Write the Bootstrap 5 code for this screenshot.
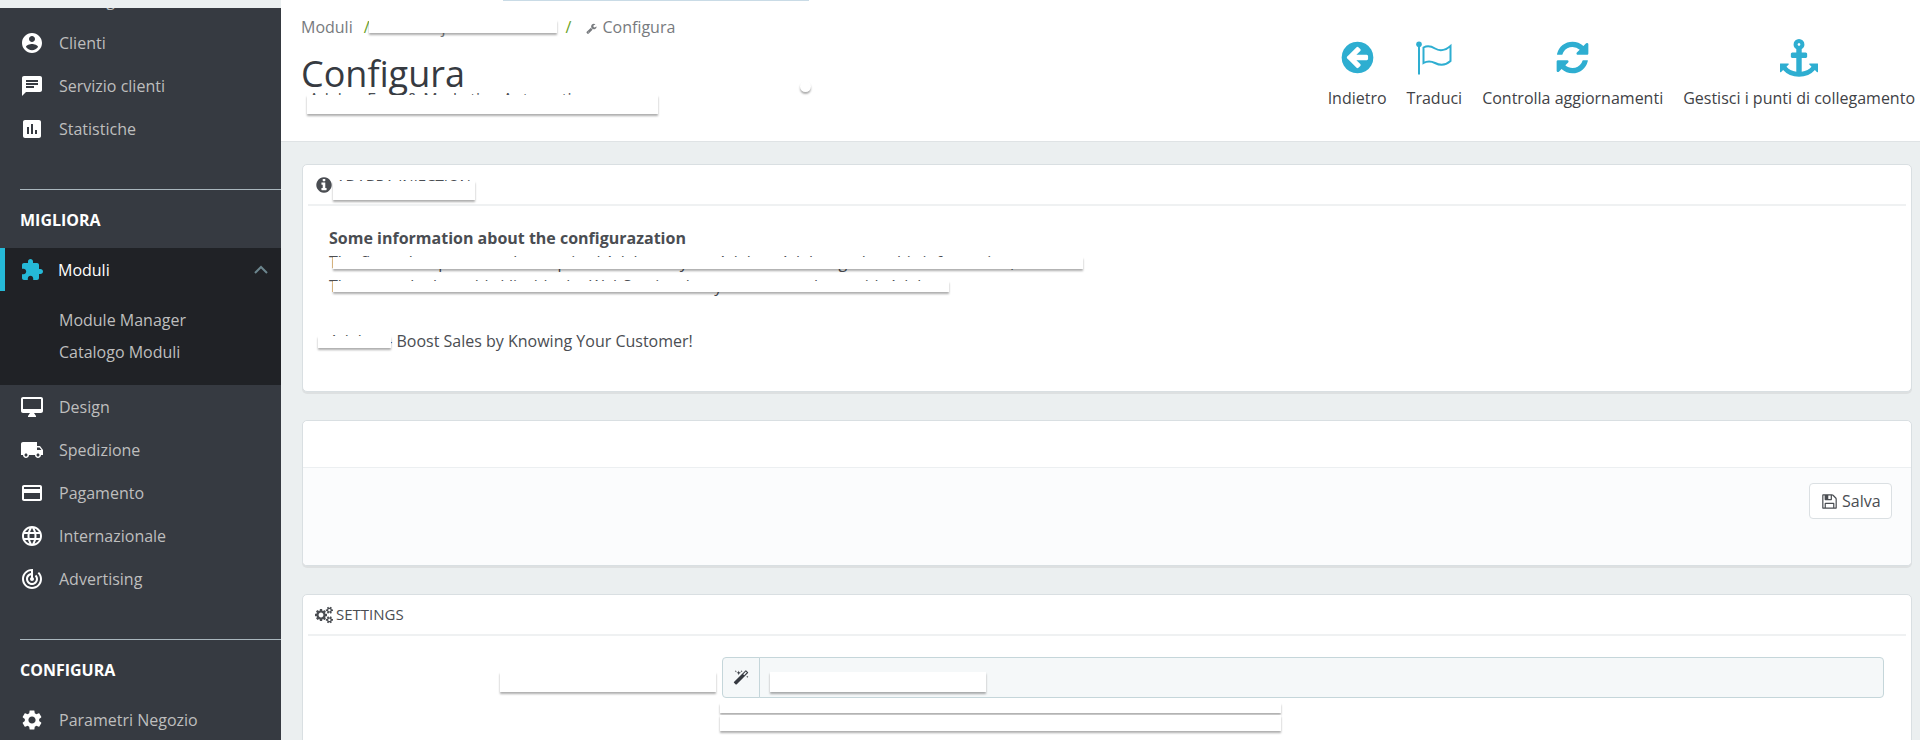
<!DOCTYPE html>
<html lang="it">
<head>
<meta charset="utf-8">
<title>Configura</title>
<link href="https://cdn.jsdelivr.net/npm/bootstrap@5.3.0/dist/css/bootstrap.min.css" rel="stylesheet">
<style>
html,body{height:740px;overflow:hidden}
body{font-family:"Open Sans","Noto Sans",sans-serif;font-size:16px;color:#4a4d52;background:#ebeff0}
a{text-decoration:none}
.app{width:1920px;height:740px;overflow:hidden}
.topline{left:503px;top:0;width:306px;height:1px;background:#c9dbe6}
.side{width:281px;flex:none;margin-top:8px;height:732px;background:#363a41;overflow:hidden}
.side-inner{margin-top:-30px}
.side-row{height:43px;padding-left:20px;color:#bebebe;gap:15px;font-size:16px;text-decoration:none}
.side-row svg{width:24px;height:24px;fill:#fff;flex:none}
.side-open{background:#202226;padding-bottom:17px}
.side-active{color:#fff;border-left:5px solid #25b9d7;padding-left:15px;padding-right:13px;gap:14px}
.side-active svg.piece{fill:#25b9d7;width:24px;height:24px}
.side-active svg.chev{width:14px;height:9px;fill:none;stroke:#6c868e;stroke-width:2;margin-left:auto;flex:none}
.side-sub{height:32px;padding-left:59px;color:#bebebe}
.side-sub-first{margin-top:13px}
.side-head{margin:39px 0 0 20px;border-top:1px solid #a9b6bd;height:59px;padding-top:20px;color:#fff;font-weight:700;font-size:16px;line-height:20px;text-transform:uppercase}
.main{min-width:0}
.head-top{height:142px;background:#fff;border-bottom:1px solid #dfe3e5;padding-left:20px;padding-right:5px}
.crumbs{padding-top:17px;margin:0;line-height:20px;color:#777a7e;white-space:nowrap}
.crumb-sep{color:#6aa31f;margin:0 0 0 11px}
.crumb-sep2{color:#6aa31f;margin:0 15px 0 6px}
.crumbs svg{width:11px;height:11px;fill:#777a7e;margin-right:5px}
.crumb-hid{width:190px;display:inline-block;white-space:nowrap;overflow:hidden;vertical-align:bottom}
.page-title{font-size:36px;line-height:44px;font-weight:400;margin:15px 0 0;color:#363a41}
.page-sub{line-height:20px;margin:-7px 0 0 8px;white-space:nowrap}
.tools{gap:20px;padding-top:38px}
.tool{color:#3f4246;text-decoration:none;line-height:20px;font-size:16px;white-space:nowrap}
.tool-ico{height:39px;margin-bottom:11px}
.tool svg{fill:#2eaed1}
.i32{width:37px;height:37px}
.iflag{width:36px;height:34px}
.i38{width:38px;height:38px}
.content{padding:22px 8px 0 21px}
.panel{--bs-card-border-color:#d9dfe2;--bs-card-border-radius:5px;--bs-card-inner-border-radius:4px;box-shadow:0 2px 0 rgba(0,0,0,.06);margin-bottom:28px;background:#fff}
.panel-head{background:#fff;border:0;border-bottom:2px solid #eff1f2;margin:0 5px;padding:0 7px;height:41px;font-size:15px;gap:3px;color:#4a4d52;text-transform:uppercase}
.panel-head svg{fill:#4a4d52;width:18px;height:18px}
.info-body{padding:20px 26px 0;height:185px;line-height:24px}
.info-body p{margin:0;white-space:nowrap}
.info-lead{font-weight:700}
.info-body .boost{padding-top:31px}
.empty-top{height:47px;background:#fff;border-bottom:1px solid #eceff1;border-radius:5px 5px 0 0}
.empty-foot{height:97px;background:#fbfcfd;padding:15px 19px 0 0;border-radius:0 0 5px 5px}
.save{--bs-btn-padding-x:11px;--bs-btn-padding-y:0;--bs-btn-font-size:16px;--bs-btn-border-color:#dbe0e3;--bs-btn-color:#4a4d52;--bs-btn-bg:#fff;--bs-btn-border-radius:4px;height:36px;width:83px;display:flex;align-items:center;gap:4px;padding-right:0;border-width:1px}
.save svg{width:17px;height:17px;fill:#4a4d52;flex:none}
.form-area{height:200px;position:relative}
.wand-group{margin:21px 27px 0 419px;width:auto;height:41px}
.wand-add{background:#f5f8f9;border-color:#c5d6da;width:38px;padding:0;justify-content:center;border-radius:4px 0 0 4px}
.wand-add svg{width:16px;height:16px;fill:#363a41}
.wand-input{background:#f5f8f9;border-color:#c5d6da;border-radius:0 4px 4px 0;height:41px}
.shade{position:absolute;background:#fff;box-shadow:0 2px 2px rgba(0,0,0,.32)}
.s1{left:369px;top:20px;width:188px;height:13px}
.s2{left:307px;top:95px;width:351px;height:19px}
.s3{left:333px;top:181px;width:142px;height:19px}
.s4{left:333px;top:257px;width:750px;height:12px}
.s5{left:333px;top:281px;width:616px;height:11px}
.s6{left:318px;top:336px;width:73px;height:12px}
.s7{left:500px;top:672px;width:216px;height:20px}
.s8{left:770px;top:672px;width:216px;height:20px}
.s9{left:720px;top:703px;width:561px;height:10px}
.s10{left:720px;top:715px;width:561px;height:16px}
.spot{left:800px;top:81px;width:11px;height:11px;border-radius:50%}
</style>
</head>
<body>
<div class="app position-relative d-flex">
  <div class="position-absolute topline"></div>
  <nav class="side">
    <div class="side-inner">
      <a class="side-row d-flex align-items-center"><svg viewBox="0 0 24 24"><path d="M20 4H4v2h16V4zm1 10v-2l-1-5H4l-1 5v2h1v6h10v-6h4v6h2v-6h1zm-9 4H6v-4h6v4z"/></svg>Catalogo</a>
      <a class="side-row d-flex align-items-center"><svg viewBox="0 0 24 24"><path d="M12 2C6.48 2 2 6.48 2 12s4.48 10 10 10 10-4.48 10-10S17.52 2 12 2zm0 3c1.66 0 3 1.34 3 3s-1.34 3-3 3-3-1.34-3-3 1.34-3 3-3zm0 14.2c-2.5 0-4.71-1.28-6-3.22.03-1.99 4-3.08 6-3.08 1.99 0 5.97 1.09 6 3.08-1.29 1.94-3.5 3.22-6 3.22z"/></svg>Clienti</a>
      <a class="side-row d-flex align-items-center"><svg viewBox="0 0 24 24"><path d="M20 2H4c-1.1 0-1.99.9-1.99 2L2 22l4-4h14c1.1 0 2-.9 2-2V4c0-1.1-.9-2-2-2zM6 9h12v2H6V9zm8 5H6v-2h8v2zm4-6H6V6h12v2z"/></svg>Servizio clienti</a>
      <a class="side-row d-flex align-items-center"><svg viewBox="0 0 24 24"><path d="M19 3H5c-1.1 0-2 .9-2 2v14c0 1.1.9 2 2 2h14c1.1 0 2-.9 2-2V5c0-1.1-.9-2-2-2zM9 17H7v-7h2v7zm4 0h-2V7h2v10zm4 0h-2v-4h2v4z"/></svg>Statistiche</a>
      <div class="side-head">Migliora</div>
      <div class="side-open">
        <a class="side-row side-active d-flex align-items-center"><svg class="piece" viewBox="0 0 24 24"><path d="M20.5 11H19V7c0-1.1-.9-2-2-2h-4V3.5C13 2.12 11.88 1 10.5 1S8 2.12 8 3.5V5H4c-1.1 0-1.99.9-1.99 2v3.8H3.5c1.49 0 2.7 1.21 2.7 2.7s-1.21 2.7-2.7 2.7H2V20c0 1.1.9 2 2 2h3.8v-1.5c0-1.49 1.21-2.7 2.7-2.7 1.49 0 2.7 1.21 2.7 2.7V22H17c1.1 0 2-.9 2-2v-4h1.5c1.38 0 2.5-1.12 2.5-2.5S21.88 11 20.5 11z"/></svg>Moduli<svg class="chev" viewBox="0 0 14 9"><path d="M1 8l6-6 6 6"/></svg></a>
        <div class="side-sub side-sub-first d-flex align-items-center">Module Manager</div>
        <div class="side-sub d-flex align-items-center">Catalogo Moduli</div>
      </div>
      <a class="side-row d-flex align-items-center"><svg viewBox="0 0 24 24"><path d="M21 2H3c-1.1 0-2 .9-2 2v12c0 1.1.9 2 2 2h7l-2 3v1h8v-1l-2-3h7c1.1 0 2-.9 2-2V4c0-1.1-.9-2-2-2zm0 12H3V4h18v10z"/></svg>Design</a>
      <a class="side-row d-flex align-items-center"><svg viewBox="0 0 24 24"><path d="M20 8h-3V4H3c-1.1 0-2 .9-2 2v11h2c0 1.66 1.34 3 3 3s3-1.34 3-3h6c0 1.66 1.34 3 3 3s3-1.34 3-3h2v-5l-3-4zM6 18.5c-.83 0-1.5-.67-1.5-1.5s.67-1.5 1.5-1.5 1.5.67 1.5 1.5-.67 1.5-1.5 1.5zm13.5-9l1.96 2.5H17V9.5h2.5zm-1.5 9c-.83 0-1.5-.67-1.5-1.5s.67-1.5 1.5-1.5 1.5.67 1.5 1.5-.67 1.5-1.5 1.5z"/></svg>Spedizione</a>
      <a class="side-row d-flex align-items-center"><svg viewBox="0 0 24 24"><path d="M20 4H4c-1.11 0-1.99.89-1.99 2L2 18c0 1.11.89 2 2 2h16c1.11 0 2-.89 2-2V6c0-1.11-.89-2-2-2zm0 14H4v-6h16v6zm0-10H4V6h16v2z"/></svg>Pagamento</a>
      <a class="side-row d-flex align-items-center"><svg viewBox="0 0 24 24"><path d="M11.99 2C6.47 2 2 6.48 2 12s4.47 10 9.99 10C17.52 22 22 17.52 22 12S17.52 2 11.99 2zm6.93 6h-2.95c-.32-1.25-.78-2.45-1.38-3.56 1.84.63 3.37 1.91 4.33 3.56zM12 4.04c.83 1.2 1.48 2.53 1.91 3.96h-3.82c.43-1.43 1.08-2.76 1.91-3.96zM4.26 14C4.1 13.36 4 12.69 4 12s.1-1.36.26-2h3.38c-.08.66-.14 1.32-.14 2 0 .68.06 1.34.14 2H4.26zm.82 2h2.95c.32 1.25.78 2.45 1.38 3.56-1.84-.63-3.37-1.9-4.33-3.56zm2.95-8H5.08c.96-1.66 2.49-2.93 4.33-3.56C8.81 5.55 8.35 6.75 8.03 8zM12 19.96c-.83-1.2-1.48-2.53-1.91-3.96h3.82c-.43 1.43-1.08 2.76-1.91 3.96zM14.34 14H9.66c-.09-.66-.16-1.32-.16-2 0-.68.07-1.35.16-2h4.68c.09.65.16 1.32.16 2 0 .68-.07 1.34-.16 2zm.25 5.56c.6-1.11 1.06-2.31 1.38-3.56h2.95c-.96 1.65-2.49 2.93-4.33 3.56zM16.36 14c.08-.66.14-1.32.14-2 0-.68-.06-1.34-.14-2h3.38c.16.64.26 1.31.26 2s-.1 1.36-.26 2h-3.38z"/></svg>Internazionale</a>
      <a class="side-row d-flex align-items-center"><svg viewBox="0 0 24 24"><path d="M19.07 4.93l-1.41 1.41C19.1 7.79 20 9.79 20 12c0 4.42-3.58 8-8 8s-8-3.58-8-8c0-4.08 3.05-7.44 7-7.93v2.02C8.16 6.57 6 9.03 6 12c0 3.31 2.69 6 6 6s6-2.69 6-6c0-1.66-.67-3.16-1.76-4.24l-1.41 1.41C15.55 9.9 16 10.9 16 12c0 2.21-1.79 4-4 4s-4-1.79-4-4c0-1.86 1.28-3.41 3-3.86v2.14c-.6.35-1 .98-1 1.72 0 1.1.9 2 2 2s2-.9 2-2c0-.74-.4-1.38-1-1.72V2h-1C6.48 2 2 6.48 2 12s4.48 10 10 10 10-4.48 10-10c0-2.76-1.12-5.26-2.93-7.07z"/></svg>Advertising</a>
      <div class="side-head">Configura</div>
      <a class="side-row d-flex align-items-center"><svg viewBox="0 0 24 24"><path d="M19.14 12.94c.04-.3.06-.61.06-.94 0-.32-.02-.64-.07-.94l2.03-1.58c.18-.14.23-.41.12-.61l-1.92-3.32c-.12-.22-.37-.29-.59-.22l-2.39.96c-.5-.38-1.03-.7-1.62-.94l-.36-2.54c-.04-.24-.24-.41-.48-.41h-3.84c-.24 0-.43.17-.47.41l-.36 2.54c-.59.24-1.13.57-1.62.94l-2.39-.96c-.22-.08-.47 0-.59.22L2.74 8.87c-.12.21-.08.47.12.61l2.03 1.58c-.05.3-.09.63-.09.94s.02.64.07.94l-2.03 1.58c-.18.14-.23.41-.12.61l1.92 3.32c.12.22.37.29.59.22l2.39-.96c.5.38 1.03.7 1.62.94l.36 2.54c.05.24.24.41.48.41h3.84c.24 0 .44-.17.47-.41l.36-2.54c.59-.24 1.13-.56 1.62-.94l2.39.96c.22.08.47 0 .59-.22l1.92-3.32c.12-.22.07-.47-.12-.61l-2.01-1.58zM12 15.6c-1.98 0-3.6-1.62-3.6-3.6s1.62-3.6 3.6-3.6 3.6 1.62 3.6 3.6-1.62 3.6-3.6 3.6z"/></svg>Parametri Negozio</a>
    </div>
  </nav>
  <div class="main flex-grow-1">
    <header class="head-top d-flex justify-content-between">
      <div>
        <div class="crumbs">Moduli<span class="crumb-sep">/</span><span class="crumb-hid">Adabra injection module</span><span class="crumb-sep2">/</span><svg viewBox="0 0 1792 1792"><path d="M448 1472q0-26-19-45t-45-19-45 19-19 45 19 45 45 19 45-19 19-45zm644-420l-682 682q-37 37-90 37-52 0-91-37l-106-108q-38-36-38-90 0-53 38-91l681-681q39 98 114.5 173.5t173.5 114.5zm634-435q0 39-23 106-47 134-164.5 217.5t-258.5 83.5q-185 0-316.5-131.5t-131.5-316.5 131.5-316.5 316.5-131.5q58 0 121.5 16.5t107.5 46.5q16 11 16 28t-16 28l-293 169v224l193 107q5-3 79-48.5t135.5-81 70.5-35.5q15 0 23.5 10t8.5 25z"/></svg>Configura</div>
        <h1 class="page-title">Configura</h1>
        <p class="page-sub">Adabra Feed &amp; Marketing Automation</p>
      </div>
      <div class="tools d-flex align-items-start">
        <a class="tool d-flex flex-column align-items-center"><span class="tool-ico d-flex align-items-center"><svg class="i32" viewBox="0 0 1792 1792"><path d="M1408 960v-128q0-26-19-45t-45-19h-502l189-189q19-19 19-45t-19-45l-91-91q-18-18-45-18t-45 18l-362 362-91 91q-18 18-18 45t18 45l91 91 362 362q18 18 45 18t45-18l91-91q18-18 18-45t-18-45l-189-189h502q26 0 45-19t19-45zm256-64q0 209-103 385.5t-279.5 279.5-385.5 103-385.5-103-279.5-279.5-103-385.5 103-385.5 279.5-279.5 385.5-103 385.5 103 279.5 279.5 103 385.5z"/></svg></span>Indietro</a>
        <a class="tool d-flex flex-column align-items-center"><span class="tool-ico d-flex align-items-center"><svg class="iflag" viewBox="0 0 36 34"><circle cx="3" cy="3.200" r="2.800"/><path d="M2 3h2v30.500H2z"/><path d="M7.500 6.500C11 4.500 15 5 19 7.500S29 10 34.500 5V20C29 25 24 24.500 19 22S11 20 7.500 22z" fill="none" stroke="#2eaed1" stroke-width="2"/></svg></span>Traduci</a>
        <a class="tool d-flex flex-column align-items-center"><span class="tool-ico d-flex align-items-center"><svg class="i32" viewBox="0 0 1792 1792"><path d="M1639 1056q0 5-1 7-64 268-268 434.5t-478 166.5q-146 0-282.500-55t-243.500-157l-129 129q-19 19-45 19t-45-19-19-45v-448q0-26 19-45t45-19h448q26 0 45 19t19 45-19 45l-137 137q71 66 161 102t187 36q134 0 250-65t186-179q11-17 53-117 8-23 30-23h192q13 0 22.500 9.500t9.500 22.500zm25-800v448q0 26-19 45t-45 19h-448q-26 0-45-19t-19-45 19-45l138-138q-148-137-349-137-134 0-250 65t-186 179q-11 17-53 117-8 23-30 23h-199q-13 0-22.500-9.500t-9.500-22.500v-7q65-268 270-434.500t480-166.500q146 0 284 55.500t245 156.500l130-129q19-19 45-19t45 19 19 45z"/></svg></span>Controlla aggiornamenti</a>
        <a class="tool d-flex flex-column align-items-center"><span class="tool-ico d-flex align-items-center"><svg class="i38" viewBox="0 0 1792 1792"><path d="M960 256q0-26-19-45t-45-19-45 19-19 45 19 45 45 19 45-19 19-45zm832 928v352q0 22-20 30-8 2-12 2-12 0-23-9l-93-93q-119 143-318.500 226.500t-429.500 83.500-429.500-83.500-318.500-226.500l-93 93q-9 9-23 9-4 0-12-2-20-8-20-30v-352q0-14 9-23t23-9h352q22 0 30 20 8 19-7 35l-100 100q67 91 189.500 153.500t271.500 82.500v-647h-192q-26 0-45-19t-19-45v-128q0-26 19-45t45-19h192v-163q-58-34-93-92.500t-35-128.500q0-106 75-181t181-75 181 75 75 181q0 70-35 128.500t-93 92.500v163h192q26 0 45 19t19 45v128q0 26-19 45t-45 19h-192v647q149-20 271.500-82.500t189.500-153.500l-100-100q-15-16-7-35 8-20 30-20h352q14 0 23 9t9 23z"/></svg></span>Gestisci i punti di collegamento</a>
      </div>
    </header>
    <div class="content">
      <section class="card panel">
        <div class="card-header panel-head d-flex align-items-center"><svg viewBox="0 0 1792 1792"><path d="M1152 1376v-160q0-14-9-23t-23-9h-96v-512q0-14-9-23t-23-9h-320q-14 0-23 9t-9 23v160q0 14 9 23t23 9h96v320h-96q-14 0-23 9t-9 23v160q0 14 9 23t23 9h448q14 0 23-9t9-23zm-128-896v-160q0-14-9-23t-23-9h-192q-14 0-23 9t-9 23v160q0 14 9 23t23 9h192q14 0 23-9t9-23zm640 416q0 209-103 385.500t-279.500 279.500-385.500 103-385.500-103-279.500-279.500-103-385.500 103-385.500 279.500-279.500 385.500-103 385.500 103 279.500 279.500 103 385.500z"/></svg>Adabra injection</div>
        <div class="card-body info-body">
          <p class="info-lead">Some information about the configurazation</p>
          <p>The first tab represents the required Adabra ... your Adabra. Adabra gather this information,</p>
          <p>The second tab enable/disable the WebService that you want to share with Adabra</p>
          <p class="boost">Adabra - Boost Sales by Knowing Your Customer!</p>
        </div>
      </section>
      <section class="card panel">
        <div class="empty-top"></div>
        <div class="card-footer empty-foot border-0 d-flex justify-content-end align-items-start">
          <button class="btn save" type="button"><svg viewBox="0 0 1792 1792"><path d="M512 1536h768v-384h-768v384zm896 0h128v-896q0-14-10-38.500t-20-34.500l-281-281q-10-10-34-20t-39-10v416q0 40-28 68t-68 28h-576q-40 0-68-28t-28-68v-416h-128v1280h128v-416q0-40 28-68t68-28h832q40 0 68 28t28 68v416zm-384-928v-320q0-13-9.500-22.500t-22.500-9.500h-192q-13 0-22.500 9.500t-9.500 22.500v320q0 13 9.500 22.500t22.500 9.500h192q13 0 22.500-9.500t9.500-22.500zm640 32v928q0 40-28 68t-68 28h-1344q-40 0-68-28t-28-68v-1344q0-40 28-68t68-28h928q40 0 88 20t76 48l280 280q28 28 48 76t20 88z"/></svg>Salva</button>
        </div>
      </section>
      <section class="card panel">
        <div class="card-header panel-head d-flex align-items-center"><svg viewBox="0 0 1920 1792"><path d="M896 896q0-106-75-181t-181-75-181 75-75 181 75 181 181 75 181-75 75-181zm768 512q0-52-38-90t-90-38-90 38-38 90q0 53 37.500 90.500t90.500 37.500 90.500-37.500 37.500-90.500zm0-1024q0-52-38-90t-90-38-90 38-38 90q0 53 37.500 90.500t90.500 37.500 90.500-37.500 37.500-90.500zm-384 421v185q0 10-7 19.500t-16 10.500l-155 24q-11 35-32 76 34 48 90 115 7 11 7 20 0 12-7 19-23 30-82.500 89.500t-78.500 59.500q-11 0-21-7l-115-90q-37 19-77 31-11 108-23 155-7 24-30 24h-186q-11 0-20-7.500t-10-17.500l-23-153q-34-10-75-31l-118 89q-7 7-20 7-11 0-21-8-144-133-144-160 0-9 7-19 10-14 41-53t47-61q-23-44-35-82l-152-24q-10-1-17-9.500t-7-19.500v-185q0-10 7-19.500t16-10.500l155-24q11-35 32-76-34-48-90-115-7-11-7-20 0-12 7-20 22-30 82-89t79-59q11 0 21 7l115 90q34-18 77-32 11-108 23-154 7-24 30-24h186q11 0 20 7.500t10 17.500l23 153q34 10 75 31l118-89q8-7 20-7 11 0 21 8 144 133 144 160 0 8-7 19-12 16-42 54t-45 60q23 48 34 82l152 23q10 2 17 10.500t7 19.500zm640 533v140q0 16-149 31-12 27-30 52 51 113 51 138 0 4-4 7-122 71-124 71-8 0-46-47t-52-68q-20 2-30 2t-30-2q-14 21-52 68t-46 47q-2 0-124-71-4-3-4-7 0-25 51-138-18-25-30-52-149-15-149-31v-140q0-16 149-31 13-29 30-52-51-113-51-138 0-4 4-7 4-2 35-20t59-34 30-16q8 0 46 46.500t52 67.500q20-2 30-2t30 2q51-71 92-112l6-2q4 0 124 70 4 3 4 7 0 25-51 138 17 23 30 52 149 15 149 31zm0-1024v140q0 16-149 31-12 27-30 52 51 113 51 138 0 4-4 7-122 71-124 71-8 0-46-47t-52-68q-20 2-30 2t-30-2q-14 21-52 68t-46 47q-2 0-124-71-4-3-4-7 0-25 51-138-18-25-30-52-149-15-149-31v-140q0-16 149-31 13-29 30-52-51-113-51-138 0-4 4-7 4-2 35-20t59-34 30-16q8 0 46 46.500t52 67.500q20-2 30-2t30 2q51-71 92-112l6-2q4 0 124 70 4 3 4 7 0 25-51 138 17 23 30 52 149 15 149 31z"/></svg>Settings</div>
        <div class="form-area">
          <div class="input-group wand-group">
            <span class="input-group-text wand-add"><svg viewBox="0 0 1792 1792"><path d="M1254 581l293-293-107-107-293 293zm447-293q0 27-18 45l-1286 1286q-18 18-45 18t-45-18l-198-198q-18-18-18-45t18-45l1286-1286q18-18 45-18t45 18l198 198q18 18 18 45zm-1351-190l98 30-98 30-30 98-30-98-98-30 98-30 30-98zm350 162l196 60-196 60-60 196-60-196-196-60 196-60 60-196zm930 478l98 30-98 30-30 98-30-98-98-30 98-30 30-98zm-640-640l98 30-98 30-30 98-30-98-98-30 98-30 30-98z"/></svg></span>
            <input class="form-control wand-input" type="text" aria-label="Chiave">
          </div>
        </div>
      </section>
    </div>
  </div>
  <div class="shade s1"></div><div class="shade s2"></div><div class="shade s3"></div><div class="shade s4"></div><div class="shade s5"></div><div class="shade s6"></div><div class="shade s7"></div><div class="shade s8"></div><div class="shade s9"></div><div class="shade s10"></div><div class="shade spot"></div>
</div>
<script src="https://cdn.jsdelivr.net/npm/bootstrap@5.3.0/dist/js/bootstrap.bundle.min.js"></script>
</body>
</html>
